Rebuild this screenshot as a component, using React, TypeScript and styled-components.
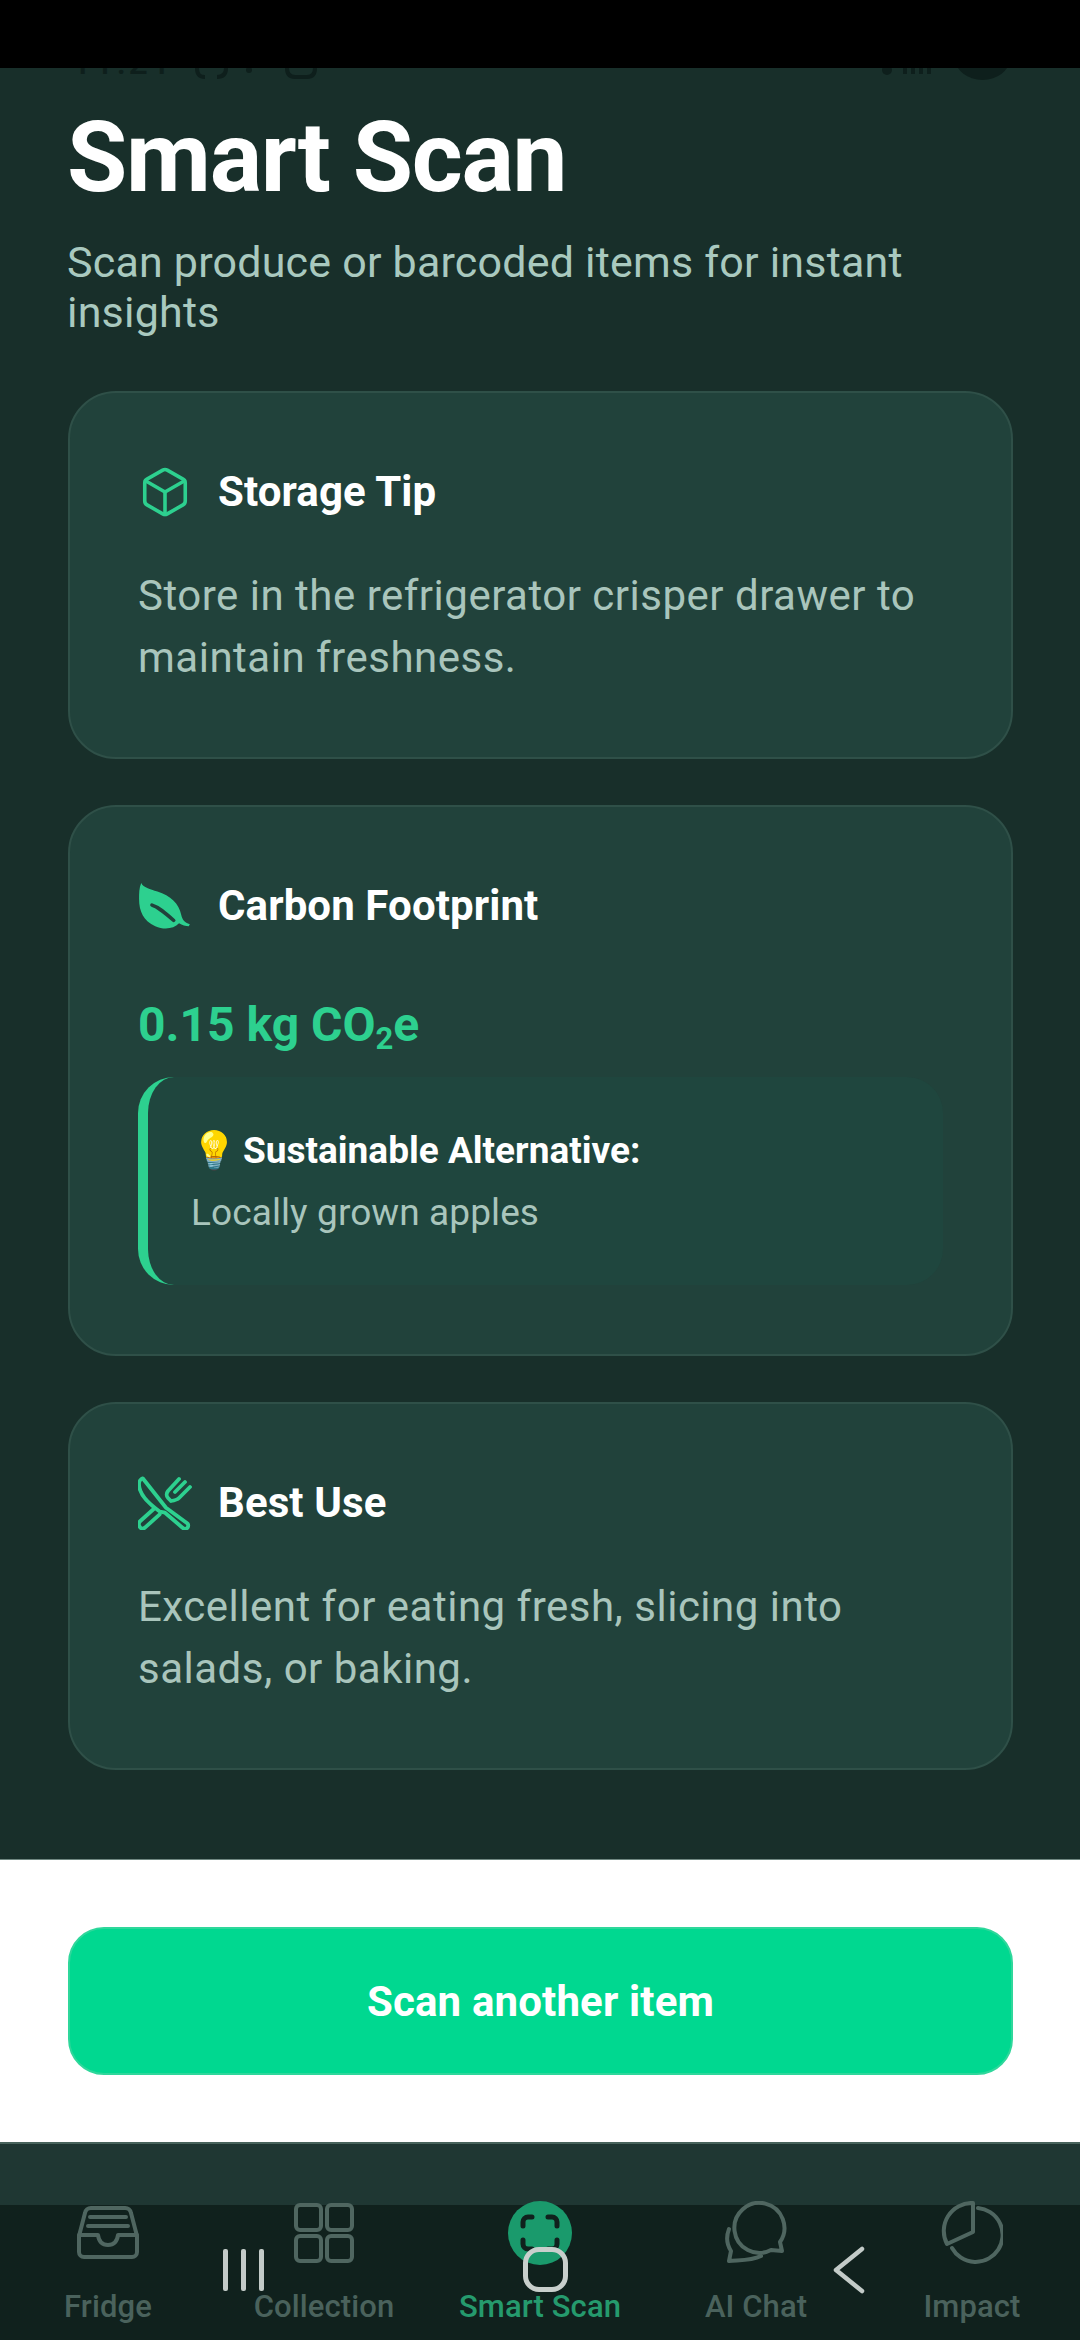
import React from 'react'
import styled, { createGlobalStyle } from 'styled-components'
import { Box } from 'lucide-react'

const GlobalStyle = createGlobalStyle`
  html, body {
    margin: 0;
    padding: 0;
    background: #182f2a;
  }
  * {
    box-sizing: border-box;
  }
`

const Screen = styled.div`
  position: relative;
  width: 1080px;
  height: 2340px;
  display: flex;
  flex-direction: column;
  overflow: hidden;
  font-family: Roboto, 'Liberation Sans', sans-serif;
  background: #182f2a;
`

const BlackBar = styled.div`
  height: 68px;
  background: #000;
  flex: none;
`

// the phone's status bar peeks out just under the black bar
const StatusEdge = styled.div`
  height: 14px;
  margin-bottom: -14px;
  padding: 0 70px 0 72px;
  display: flex;
  align-items: flex-start;
  gap: 14px;
  overflow: hidden;
  flex: none;
`

const StatusTime = styled.span`
  margin-top: -24px;
  font-size: 34px;
  line-height: 36px;
  font-weight: 500;
  letter-spacing: 3px;
  color: #0e1f1c;
`

const StatusGlyphs = styled.svg`
  flex: none;
`

const StatusRight = styled.div`
  margin-left: auto;
  display: flex;
  align-items: flex-start;
  gap: 18px;
`

const StatusPill = styled.span`
  width: 55px;
  height: 44px;
  margin-top: -32px;
  border-radius: 50%;
  background: #0e1f1c;
`

const Main = styled.main`
  flex: 1;
  padding: 34px 67px 0 68px;
  display: flex;
  flex-direction: column;
`

const Title = styled.h1`
  margin: 0 0 0 -1px;
  font-size: 98px;
  line-height: 112px;
  font-weight: 700;
  letter-spacing: -1.3px;
  color: #fff;
`

const Subtitle = styled.p`
  margin: 23px 0 0 -1px;
  font-size: 43px;
  line-height: 50px;
  letter-spacing: 0.2px;
  color: #a9c9bf;
`

const Cards = styled.div`
  margin-top: 54px;
  display: flex;
  flex-direction: column;
  gap: 46px;
`

const Card = styled.section`
  padding: 71px 68px 68px;
  border-radius: 48px;
  border: 2px solid #2f5048;
  background: #21423b;
`

const CardHeader = styled.div`
  display: flex;
  align-items: center;
  gap: 26px;
  height: 56px;
`

const IconSlot = styled.span`
  width: 54px;
  height: 54px;
  flex: none;
  display: flex;
  align-items: center;
  justify-content: center;
  color: #2dd08f;
`

const CardTitle = styled.h2`
  margin: 0;
  font-size: 42px;
  line-height: 56px;
  font-weight: 700;
  letter-spacing: 0.1px;
  color: #fff;
`

const CardText = styled.p`
  margin: 45px 0 0;
  font-size: 42px;
  line-height: 62px;
  letter-spacing: 0.5px;
  color: #a9c5bc;
`

const CarbonValue = styled.div`
  margin-top: 62px;
  font-size: 48px;
  line-height: 58px;
  font-weight: 700;
  color: #2dd08f;

  sub {
    font-size: 31px;
    line-height: 0;
    vertical-align: -8px;
  }
`

const AlternativeBox = styled.div`
  margin-top: 23px;
  height: 208px;
  padding: 49px 0 0 43px;
  border-left: 10px solid #2dd08f;
  border-radius: 36px;
  background: #1f463e;
  margin-bottom: 1px;
`

const AlternativeTitle = styled.div`
  display: flex;
  align-items: center;
  gap: 6px;
  font-size: 37px;
  line-height: 50px;
  font-weight: 700;
  color: #fff;
`

const AlternativeText = styled.div`
  margin-top: 12px;
  font-size: 37px;
  line-height: 50px;
  letter-spacing: 0.1px;
  color: #a9c5bc;
`

const ActionArea = styled.div`
  height: 283px;
  flex: none;
  padding: 67px 67px 67px 68px;
  background: #fff;
  border-top: 1px solid #6f8781;
`

const ScanButton = styled.button`
  width: 100%;
  height: 148px;
  border: 2px solid #2fd79b;
  border-radius: 36px;
  background: #00d890;
  font-family: inherit;
  font-size: 42px;
  font-weight: 700;
  letter-spacing: 0.15px;
  color: #fff;
`

const NavSpacer = styled.div`
  height: 63px;
  flex: none;
  background: #1f3733;
  border-top: 2px solid #48635c;
`

const BottomNav = styled.nav`
  height: 135px;
  flex: none;
  display: grid;
  grid-template-columns: repeat(5, 216px);
  background: #10211d;
`

const NavItem = styled.div<{ $active?: boolean }>`
  display: flex;
  flex-direction: column;
  align-items: center;
  color: ${p => (p.$active ? '#259a6d' : '#4a625c')};
`

const NavIcon = styled.span<{ $active?: boolean }>`
  width: 64px;
  height: 64px;
  margin-top: -4px;
  display: flex;
  align-items: center;
  justify-content: center;
  border-radius: 50%;
  background: ${p => (p.$active ? '#1a9a6c' : 'transparent')};
  color: ${p => (p.$active ? '#10211d' : '#4f6660')};
`

const NavLabel = styled.span`
  margin-top: 23px;
  font-size: 31px;
  line-height: 38px;
  font-weight: 500;
  letter-spacing: 0.1px;
`

const SystemBack = styled.svg`
  position: absolute;
  left: 833px;
  top: 2246px;
`

const SystemRecents = styled.div`
  position: absolute;
  left: 223px;
  top: 2249px;
  width: 41px;
  height: 42px;
  display: flex;
  justify-content: space-between;
`

const RecentBar = styled.span`
  width: 5px;
  background: #c3cbc8;
  border-radius: 2px;
`

const SystemHome = styled.div`
  position: absolute;
  left: 523px;
  top: 2247px;
  width: 45px;
  height: 45px;
  border: 5px solid #c8cfcc;
  border-radius: 16px;
`

const LeafIcon = () => (
  <svg width="54" height="48" viewBox="0 0 50 50" preserveAspectRatio="none">
    <path d="M3 1c2 5 8 6 15 9 12 4 20 13 22 24 1 5 3 8 8 10l-1 2c-3 0-6-1-9-3-5 6-14 7-22 3C5 41 1 30 1 18 1 12 1 6 3 1z" fill="currentColor" />
    <path d="M13 24c6 2 12 8 20 16" fill="none" stroke="#21423b" strokeWidth="3.5" strokeLinecap="round" />
  </svg>
)

const CutleryIcon = () => (
  <svg width="54" height="54" viewBox="0 0 54 54" fill="none" stroke="currentColor" strokeWidth="3.8" strokeLinecap="round" strokeLinejoin="round">
    <path d="M4.7 2.3 28 31.7 49.5 47.5c1.5 2 .5 4.5-1.5 5.2-1 .3-2.5 0-3.5-1L27 36.7l-5 -1C11 28 1 19 1 8.3c0-3 2-5.5 3.7-6z" />
    <path d="M15.7 33 1.8 45.5c-1.5 2-1 4.5.7 6.2 1.5 1.3 3.5 1 5-.5L21.7 38.3" />
    <path d="M33 25 30 22c-2-2-1.5-5 0-7L41 3M52 11 41 22c-2 2-5 2.5-8 3M47 6 37 16" />
  </svg>
)

const FridgeIcon = () => (
  <svg width="62" height="54" viewBox="0 0 62 54" fill="none" stroke="currentColor" strokeWidth="4" strokeLinecap="round" strokeLinejoin="round">
    <path d="M2 30 8 7a6 6 0 0 1 6-5h34a6 6 0 0 1 6 5l6 23v16a5 5 0 0 1-5 5H7a5 5 0 0 1-5-5z" />
    <path d="M2 29h19c1 8 5 10 10 10s9-2 10-10h19" />
    <path d="M13 11h36M11 20h40" />
  </svg>
)

const GridIcon = () => (
  <svg width="60" height="60" viewBox="0 0 60 60" fill="none" stroke="currentColor" strokeWidth="4">
    <rect x="2" y="2" width="25" height="25" rx="4" />
    <rect x="33" y="2" width="25" height="25" rx="4" />
    <rect x="2" y="33" width="25" height="25" rx="4" />
    <rect x="33" y="33" width="25" height="25" rx="4" />
  </svg>
)

const ScanIcon = () => (
  <svg width="40" height="38" viewBox="0 0 40 38" fill="none" stroke="currentColor" strokeWidth="5" strokeLinecap="round" strokeLinejoin="round">
    <path d="M3 12V8a5 5 0 0 1 5-5h4M28 3h4a5 5 0 0 1 5 5v4M37 26v4a5 5 0 0 1-5 5h-4M12 35H8a5 5 0 0 1-5-5v-4" />
  </svg>
)

const ChatIcon = () => (
  <svg width="62" height="64" viewBox="0 0 62 64" fill="none" stroke="currentColor" strokeWidth="4" strokeLinecap="round" strokeLinejoin="round">
    <path d="M55 41A25 25 0 1 0 46 49L57 50z" />
    <path d="M4 28C1 36 2 44 6 50L4 60C14 59 26 60 36 55" />
  </svg>
)

const ImpactIcon = () => (
  <svg width="62" height="64" viewBox="0 0 62 64" fill="none" stroke="currentColor" strokeWidth="4" strokeLinecap="round" strokeLinejoin="round">
    <path d="M32 2V31L6 43A28 28 0 0 1 32 2z" />
    <path d="M37 7A27 27 0 1 1 11 47" />
  </svg>
)

const navItems = [
  { label: 'Fridge', icon: <FridgeIcon /> },
  { label: 'Collection', icon: <GridIcon /> },
  { label: 'Smart Scan', icon: <ScanIcon />, active: true },
  { label: 'AI Chat', icon: <ChatIcon /> },
  { label: 'Impact', icon: <ImpactIcon /> }
]

const App = () => {
  return (
    <Screen>
      <GlobalStyle />
      <BlackBar />
      <StatusEdge>
        <StatusTime>11:21</StatusTime>
        <StatusGlyphs width="130" height="14" viewBox="0 0 130 14" fill="none" stroke="#0e1f1c" strokeWidth="4">
          <path d="M10 0c0 6 2 9 8 9M30 9c6 0 9-3 9-9" />
          <circle cx="62" cy="2" r="3" fill="#0e1f1c" stroke="none" />
          <path d="M100 0c0 6 3 9 8 9h12c5 0 8-3 8-9" />
        </StatusGlyphs>
        <StatusRight>
          <StatusGlyphs width="56" height="14" viewBox="0 0 56 14" fill="#0e1f1c">
            <circle cx="6" cy="2" r="5" />
            <rect x="22" y="0" width="4" height="6" />
            <rect x="30" y="0" width="4" height="6" />
            <rect x="38" y="0" width="4" height="6" />
            <rect x="46" y="0" width="4" height="6" />
          </StatusGlyphs>
          <StatusPill />
        </StatusRight>
      </StatusEdge>
      <Main>
        <Title>Smart Scan</Title>
        <Subtitle>Scan produce or barcoded items for instant insights</Subtitle>
        <Cards>
          <Card>
            <CardHeader>
              <IconSlot>
                <Box size={60} strokeWidth={1.6} />
              </IconSlot>
              <CardTitle>Storage Tip</CardTitle>
            </CardHeader>
            <CardText>Store in the refrigerator crisper drawer to maintain freshness.</CardText>
          </Card>
          <Card>
            <CardHeader>
              <IconSlot>
                <LeafIcon />
              </IconSlot>
              <CardTitle>Carbon Footprint</CardTitle>
            </CardHeader>
            <CarbonValue>
              0.15 kg CO<sub>2</sub>e
            </CarbonValue>
            <AlternativeBox>
              <AlternativeTitle>
                <span>💡</span> Sustainable Alternative:
              </AlternativeTitle>
              <AlternativeText>Locally grown apples</AlternativeText>
            </AlternativeBox>
          </Card>
          <Card>
            <CardHeader>
              <IconSlot>
                <CutleryIcon />
              </IconSlot>
              <CardTitle>Best Use</CardTitle>
            </CardHeader>
            <CardText>Excellent for eating fresh, slicing into salads, or baking.</CardText>
          </Card>
        </Cards>
      </Main>
      <ActionArea>
        <ScanButton>Scan another item</ScanButton>
      </ActionArea>
      <NavSpacer />
      <BottomNav>
        {navItems.map(item => (
          <NavItem key={item.label} $active={item.active}>
            <NavIcon $active={item.active}>{item.icon}</NavIcon>
            <NavLabel>{item.label}</NavLabel>
          </NavItem>
        ))}
      </BottomNav>
      <SystemRecents>
        <RecentBar />
        <RecentBar />
        <RecentBar />
      </SystemRecents>
      <SystemHome />
      <SystemBack width="32" height="48" viewBox="0 0 32 48" fill="none" stroke="#c3cbc8" strokeWidth="4.5" strokeLinecap="round" strokeLinejoin="round">
        <path d="M29 3 3 24l26 21" />
      </SystemBack>
    </Screen>
  )
}

export default App
